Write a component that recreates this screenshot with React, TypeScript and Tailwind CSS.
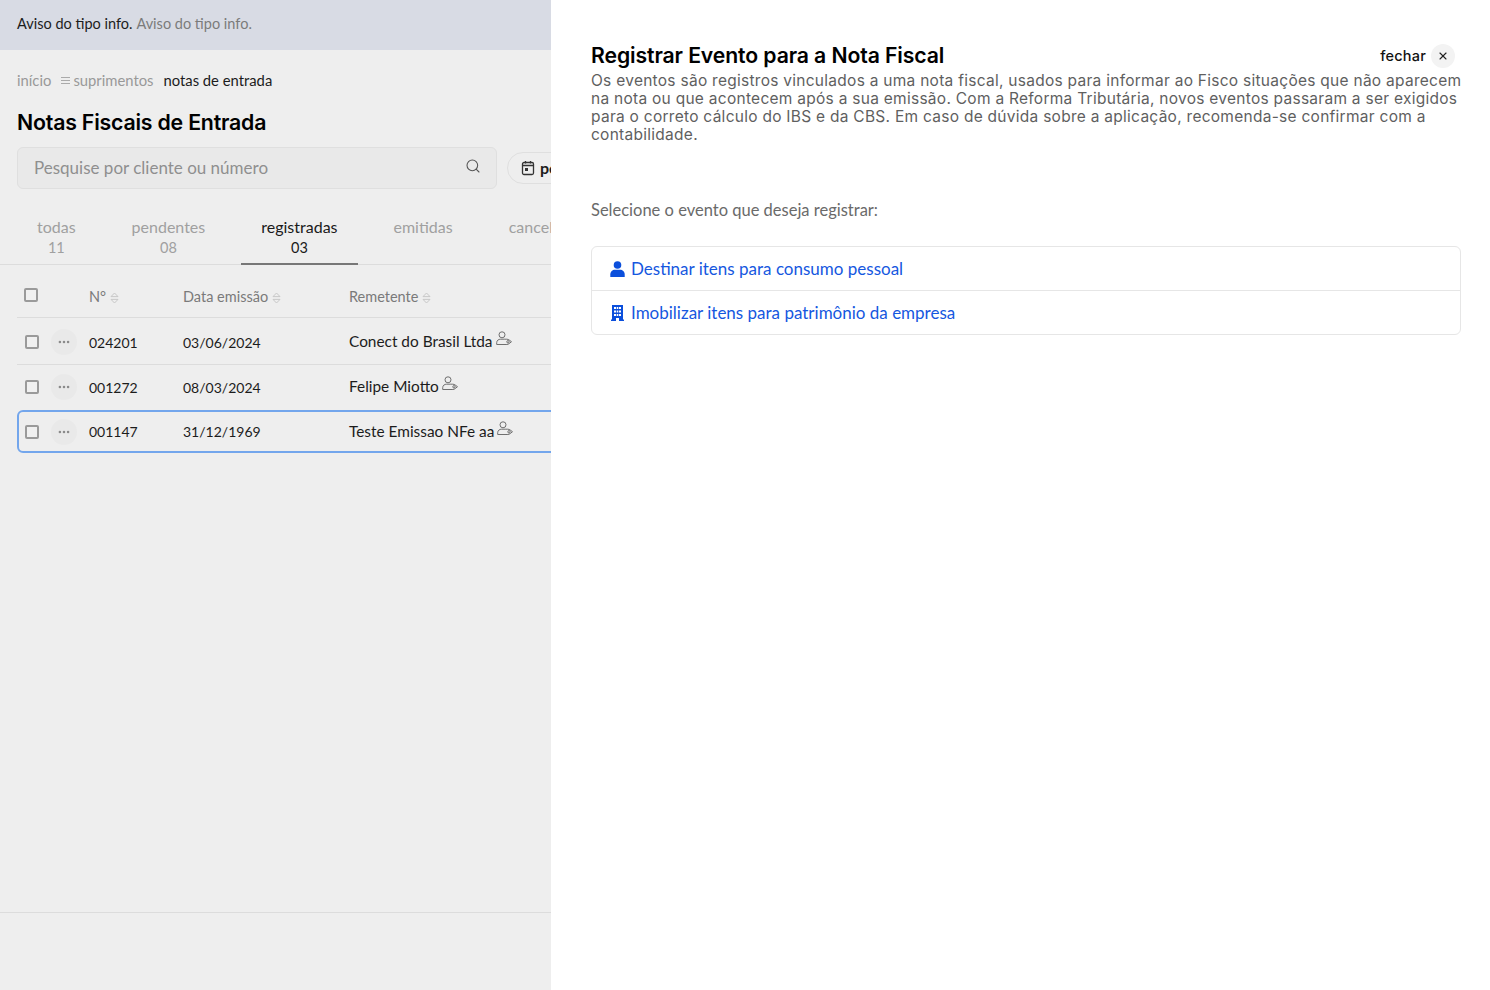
import React from "react";
import { Search, X, Ellipsis } from "lucide-react";

const rows = [
  { num: "024201", date: "03/06/2024", name: "Conect do Brasil Ltda", cls: "h-[47px] pt-[2px] border-b border-[#dcdcdc]" },
  { num: "001272", date: "08/03/2024", name: "Felipe Miotto", cls: "h-[45px] pb-[1px]" },
];

const tabs = [
  { label: "todas", count: "11" },
  { label: "pendentes", count: "08" },
  { label: "registradas", count: "03", active: true },
  { label: "emitidas", count: "" },
  { label: "canceladas", count: "" },
];

const SortIcon = () => (
  <svg width="9" height="12" viewBox="0 0 9 12" fill="none" stroke="#c8c8c8" strokeWidth="1" className="ml-[4px] mt-[2px] shrink-0">
    <path d="M4.5 1 8 4.6H1Z" />
    <path d="M4.5 11 8 7.4H1Z" />
  </svg>
);

const PersonTag = () => (
  <svg width="17" height="15" viewBox="0 0 17 15" fill="none" stroke="#6f6f6f" strokeWidth="1" className="ml-[3px] -mt-[7px] shrink-0">
    <circle cx="6" cy="3.8" r="3" />
    <path d="M.7 13.5v-1.8c0-2.3 1.8-3.5 4-3.5h3.5" />
    <path d="M.7 13.5h9.8" />
    <path d="M8.2 8.2h2.6c1 0 1.6.3 2.4.8l2.3 1.7-2.3 1.9c-.8.6-1.5.9-2.5.9H9.5" />
    <circle cx="12" cy="10.8" r="1.2" />
  </svg>
);

const Check = ({ className = "" }: { className?: string }) => (
  <div className={`w-[14px] h-[14px] rounded-[2px] border-2 border-[#9a9a9a] bg-[#f0f0f0] shrink-0 ${className}`} />
);

const RowCells = ({ num, date, name }: { num: string; date: string; name: string }) => (
  <>
    <Check className="ml-[8px]" />
    <div className="w-[26px] h-[26px] ml-[12px] rounded-full bg-[#e9e9e9] flex items-center justify-center shrink-0">
      <Ellipsis size={14} strokeWidth={2.4} color="#8b8b8b" />
    </div>
    <span className="ml-[12px] w-[94px] text-[14px] text-[#1c1c1c]">{num}</span>
    <span className="w-[166px] text-[14px] text-[#1c1c1c]">{date}</span>
    <span className="text-[15.4px] text-[#1c1c1c] whitespace-nowrap">{name}</span>
    <PersonTag />
  </>
);

export default function App() {
  return (
    <div className="w-[1490px] h-[990px] flex overflow-hidden bg-white font-['Lato','Noto_Sans',sans-serif]">
      {/* left page, behind the drawer */}
      <div className="w-[551px] shrink-0 h-full bg-[#eeeeee] flex flex-col overflow-hidden">
        <div className="h-[50px] shrink-0 bg-[#d8dbe4] flex items-center pb-[2px] px-[17px] text-[14.5px] whitespace-nowrap">
          <span className="text-[#1d1d1d]">Aviso do tipo info.</span>
          <span className="ml-1 text-[#7b7b7b]">Aviso do tipo info.</span>
        </div>

        <div className="flex items-center mt-[21px] px-[17px] h-[18px] text-[14.8px] whitespace-nowrap">
          <span className="text-[#999999]">início</span>
          <span className="ml-[10px] mr-[3px] flex flex-col gap-[2px] w-[9px]">
            <span className="h-px bg-[#aaaaaa]" />
            <span className="h-px bg-[#aaaaaa]" />
            <span className="h-px bg-[#aaaaaa]" />
          </span>
          <span className="text-[#999999]">suprimentos</span>
          <span className="ml-[10px] text-[#1c1c1c]">notas de entrada</span>
        </div>

        <h1 className="mt-[19px] px-[17px] h-[28px] leading-[28px] text-[21.3px] font-semibold text-black tracking-[-0.2px] font-['Inter',sans-serif] whitespace-nowrap">
          Notas Fiscais de Entrada
        </h1>

        <div className="mt-[11px] px-[17px] flex gap-[10px] shrink-0">
          <div className="w-[480px] h-[42px] shrink-0 rounded-[6px] border border-[#dfdfdf] bg-[#e9e9e9] flex items-center justify-between pl-[16px] pr-[15px]">
            <span className="text-[17px] text-[#8f8f8f]">Pesquise por cliente ou número</span>
            <Search size={16} strokeWidth={1.6} color="#555555" className="-mt-[4px]" />
          </div>
          <div className="h-[32px] mt-[5px] w-[100px] shrink-0 rounded-full border border-[#dfdfdf] flex items-center pl-[13px] gap-[5px] text-[16px] font-bold text-[#1c1c1c] whitespace-nowrap">
            <svg width="14" height="16" viewBox="0 0 14 16" fill="none" stroke="#333333" strokeWidth="1.3" className="shrink-0">
              <rect x="1.5" y="2.5" width="11" height="12" rx="1.5" />
              <path d="M1.5 5.5h11M4.5 1v2.5M9.5 1v2.5" />
              <rect x="4" y="8" width="3" height="3" fill="#333333" stroke="none" />
            </svg>
            <span>período</span>
          </div>
        </div>

        <div className="mt-[27px] h-[49px] shrink-0 border-b border-[#dcdcdc] flex gap-4 pl-[17px]">
          {tabs.map((t) => (
            <div
              key={t.label}
              className={`shrink-0 h-[49px] px-5 flex flex-col items-center text-[16px] leading-[21px] whitespace-nowrap ${
                t.active ? "text-[#1a1a1a] border-b-2 border-[#777777]" : "text-[#a0a0a0]"
              }`}
            >
              <span>{t.label}</span>
              <span className="text-[14.5px]">{t.count}</span>
            </div>
          ))}
        </div>

        <div className="h-[53px] shrink-0 ml-[17px] pt-[12px] border-b border-[#dcdcdc] flex items-center text-[14.5px] text-[#7a7a7a] whitespace-nowrap">
          <Check className="ml-[7px] -mt-[4px]" />
          <span className="ml-[51px] w-[94px] flex items-center">N°<SortIcon /></span>
          <span className="w-[166px] flex items-center">Data emissão<SortIcon /></span>
          <span className="flex items-center">Remetente<SortIcon /></span>
        </div>

        {rows.map((r) => (
          <div key={r.num} className={`${r.cls} shrink-0 ml-[17px] flex items-center`}>
            <RowCells num={r.num} date={r.date} name={r.name} />
          </div>
        ))}

        <div className="h-[43px] shrink-0 ml-[17px] -mr-[10px] flex items-center rounded-[6px] border-2 border-[#73a6ec]">
          <div className="-ml-[2px] flex items-center">
            <RowCells num="001147" date="31/12/1969" name="Teste Emissao NFe aa" />
          </div>
        </div>

        <div className="flex-1" />
        <div className="h-[78px] shrink-0 border-t border-[#dcdcdc]" />
      </div>

      {/* drawer */}
      <div className="flex-1 min-w-0 h-full bg-white pl-[40px] pr-[29px] pt-[42px]">
        <div className="flex justify-between h-[26px]">
          <h2 className="text-[21.2px] leading-[26px] font-semibold text-black tracking-[-0.1px] font-['Inter',sans-serif] whitespace-nowrap">
            Registrar Evento para a Nota Fiscal
          </h2>
          <div className="flex items-center gap-[5px] mr-[6px] mt-[2px]">
            <span className="text-[14.5px] tracking-[0.2px] text-[#111111] font-medium font-['Inter',sans-serif]">fechar</span>
            <span className="w-[24px] h-[24px] rounded-full bg-[#f3f3f3] flex items-center justify-center">
              <X size={12} strokeWidth={2.2} color="#222222" />
            </span>
          </div>
        </div>

        <p className="mt-[4px] text-[15.5px] leading-[18px] tracking-[0.27px] text-[#5f5f5f] font-['Inter',sans-serif] whitespace-nowrap">
          Os eventos são registros vinculados a uma nota fiscal, usados para informar ao Fisco situações que não aparecem
          <br />
          na nota ou que acontecem após a sua emissão. Com a Reforma Tributária, novos eventos passaram a ser exigidos
          <br />
          para o correto cálculo do IBS e da CBS. Em caso de dúvida sobre a aplicação, recomenda-se confirmar com a
          <br />
          contabilidade.
        </p>

        <p className="mt-[56px] text-[16.5px] leading-[20px] text-[#6a6a6a]">Selecione o evento que deseja registrar:</p>

        <div className="mt-[26px] rounded-[6px] border border-[#e6e6e6]">
          <div className="h-[44px] flex items-center pl-[18px] gap-[6px] border-b border-[#e6e6e6] text-[17px] text-[#1557e0]">
            <svg width="15" height="16" viewBox="0 0 15 16" fill="#0b4fdc">
              <circle cx="7.5" cy="4" r="3.8" />
              <path d="M0.3 16v-2.6C.3 10.6 2.5 8.7 5 8.7h5c2.5 0 4.7 1.9 4.7 4.7V16Z" />
            </svg>
            <span>Destinar itens para consumo pessoal</span>
          </div>
          <div className="h-[43px] flex items-center pl-[18px] gap-[6px] text-[17px] text-[#1557e0]">
            <svg width="15" height="16" viewBox="0 0 15 16" fill="#0b4fdc">
              <path
                fillRule="evenodd"
                d="M2 0h11v14.5h1V16H9v-3H6v3H1v-1.5h1ZM4 2v2h2V2Zm2.7 0v2h1.6V2ZM9 2v2h2V2ZM4 5.5v2h2v-2Zm2.7 0v2h1.6v-2Zm2.3 0v2h2v-2ZM4 9v2h2V9Zm2.7 0v2h1.6V9ZM9 9v2h2V9Z"
              />
            </svg>
            <span>Imobilizar itens para patrimônio da empresa</span>
          </div>
        </div>
      </div>
    </div>
  );
}
